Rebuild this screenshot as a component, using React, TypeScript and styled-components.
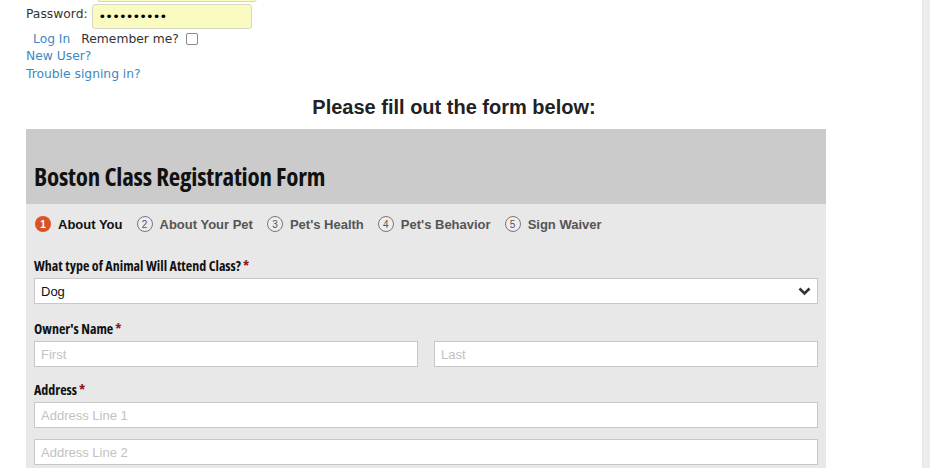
import React from "react";
import styled, { createGlobalStyle } from "styled-components";

const GlobalStyle = createGlobalStyle`
  html, body { margin: 0; padding: 0; background: #ffffff; overflow: hidden; }
  * { box-sizing: border-box; }
`;

const Shell = styled.div`
  display: flex;
  width: 930px;
  height: 468px;
  overflow: hidden;
`;

const Main = styled.div`
  flex: 1;
  padding-left: 26px;
  overflow: hidden;
`;

const ScrollTrack = styled.div`
  width: 8px;
  background: #ececec;
  border-left: 1px solid #e6e6e6;
`;

const Content = styled.div`
  width: 856px;
`;

const LoginBlock = styled.div`
  margin-top: -23px;
  font-family: "DejaVu Sans", Verdana, sans-serif;
  font-size: 12.3px;
  color: #333;
`;

const CredRow = styled.div`
  display: flex;
  align-items: flex-start;
  margin-bottom: 2px;
`;

const CredLabel = styled.span`
  padding-top: 3px;
  line-height: 15px;
  margin-right: 4px;
`;

const CredInput = styled.input`
  width: 160px;
  height: 25px;
  border: 1px solid #d6d6c4;
  border-radius: 3px;
  background: #fafbc0;
  padding: 0 6px;
  font-family: "DejaVu Sans", Verdana, sans-serif;
  font-size: 13px;
  color: #000;
  letter-spacing: -0.9px;
  outline: none;
`;

const ActionRow = styled.div`
  display: flex;
  align-items: center;
  height: 18px;
  margin-top: -1px;
  padding-left: 7px;
`;

const Link = styled.a`
  color: #3b88c6;
  text-decoration: none;
  cursor: pointer;
`;

const Remember = styled.span`
  margin-left: 11px;
  color: #333;
`;

const Check = styled.span`
  display: inline-block;
  width: 12px;
  height: 12px;
  margin-left: 7px;
  border: 1px solid #8a8a8a;
  border-radius: 2px;
  background: #fff;
`;

const LinkList = styled.div`
  margin-top: -1px;
`;

const LinkLine = styled.div`
  line-height: 18px;
  height: 18px;
`;

const PageHeading = styled.h2`
  margin: 12px 0 10px;
  text-align: center;
  font-family: "Liberation Sans", Arial, sans-serif;
  font-size: 20px;
  line-height: 24px;
  font-weight: 700;
  color: #222;
`;

const Form = styled.div`
  width: 800px;
`;

const FormHeader = styled.div`
  height: 75px;
  background: #cbcbcb;
  padding: 32px 8px 0;
`;

const FormTitle = styled.h1`
  margin: 0;
  font-family: "Open Sans", sans-serif;
  font-stretch: 75%;
  font-weight: 700;
  font-size: 25px;
  line-height: 30px;
  color: #111;
  letter-spacing: -0.2px;
`;

const FormBody = styled.div`
  background: #e8e8e8;
  padding: 12px 8px 10px;
`;

const Steps = styled.div`
  display: flex;
  align-items: center;
  height: 16px;
  margin-bottom: 25px;
  padding-left: 1px;
`;

const Step = styled.div`
  display: flex;
  align-items: center;
  margin-right: 14px;
`;

const StepNum = styled.span<{ $active?: boolean }>`
  display: flex;
  align-items: center;
  justify-content: center;
  width: 16px;
  height: 16px;
  border-radius: 50%;
  margin-right: 7px;
  font-family: "Liberation Sans", Arial, sans-serif;
  font-size: 10px;
  font-weight: ${(p) => (p.$active ? 700 : 400)};
  color: ${(p) => (p.$active ? "#fff" : "#555")};
  background: ${(p) => (p.$active ? "#dc5323" : "#eeeeee")};
  border: ${(p) => (p.$active ? "none" : "1px solid #777")};
`;

const StepText = styled.span<{ $active?: boolean }>`
  font-family: "Liberation Sans", Arial, sans-serif;
  font-size: 13px;
  font-weight: 700;
  color: ${(p) => (p.$active ? "#111" : "#555")};
`;

const Field = styled.div<{ $gap?: number }>`
  margin-bottom: ${(p) => p.$gap ?? 14}px;
`;

const FieldLabel = styled.div`
  height: 18px;
  line-height: 18px;
  margin-bottom: 3px;
  font-family: "Open Sans", sans-serif;
  font-stretch: 75%;
  font-weight: 700;
  font-size: 14px;
  color: #111;
`;

const Req = styled.span`
  color: #8e1717;
  margin-left: 2px;
`;

const SelectBox = styled.div`
  display: flex;
  align-items: center;
  justify-content: space-between;
  height: 26px;
  background: #fff;
  border: 1px solid #c8c8c8;
  padding: 0 6px 0 6px;
  font-family: "Liberation Sans", Arial, sans-serif;
  font-size: 13px;
  color: #111;
`;

const TextInput = styled.input`
  display: block;
  width: 100%;
  height: 26px;
  background: #fff;
  border: 1px solid #c8c8c8;
  padding: 0 6px;
  font-family: "Liberation Sans", Arial, sans-serif;
  font-size: 13px;
  color: #111;
  outline: none;
  &::placeholder { color: #c2c2c2; }
`;

const TwoCol = styled.div`
  display: grid;
  grid-template-columns: 1fr 1fr;
  column-gap: 16px;
`;

const Stack = styled.div`
  display: flex;
  flex-direction: column;
  gap: 11px;
`;

const steps = ["About You", "About Your Pet", "Pet's Health", "Pet's Behavior", "Sign Waiver"];

export default function App() {
  return (
    <>
      <GlobalStyle />
      <Shell>
        <Main>
          <Content>
            <LoginBlock>
              <CredRow>
                <CredLabel>Username:</CredLabel>
                <CredInput defaultValue="" readOnly />
              </CredRow>
              <CredRow>
                <CredLabel>Password:</CredLabel>
                <CredInput type="password" defaultValue="abcdefghij" readOnly />
              </CredRow>
              <ActionRow>
                <Link>Log In</Link>
                <Remember>Remember me?</Remember>
                <Check />
              </ActionRow>
              <LinkList>
                <LinkLine><Link>New User?</Link></LinkLine>
                <LinkLine><Link>Trouble signing in?</Link></LinkLine>
              </LinkList>
            </LoginBlock>
            <PageHeading>Please fill out the form below:</PageHeading>
            <Form>
              <FormHeader>
                <FormTitle>Boston Class Registration Form</FormTitle>
              </FormHeader>
              <FormBody>
                <Steps>
                  {steps.map((s, i) => (
                    <Step key={s}>
                      <StepNum $active={i === 0}>{i + 1}</StepNum>
                      <StepText $active={i === 0}>{s}</StepText>
                    </Step>
                  ))}
                </Steps>
                <Field $gap={16}>
                  <FieldLabel>What type of Animal Will Attend Class?<Req>*</Req></FieldLabel>
                  <SelectBox>
                    <span>Dog</span>
                    <svg width="13" height="9" viewBox="0 0 13 9">
                      <path d="M1.5 1.5 L6.5 6.5 L11.5 1.5" fill="none" stroke="#333" strokeWidth="2.6" />
                    </svg>
                  </SelectBox>
                </Field>
                <Field $gap={14}>
                  <FieldLabel>Owner's Name<Req>*</Req></FieldLabel>
                  <TwoCol>
                    <TextInput placeholder="First" />
                    <TextInput placeholder="Last" />
                  </TwoCol>
                </Field>
                <Field>
                  <FieldLabel>Address<Req>*</Req></FieldLabel>
                  <Stack>
                    <TextInput placeholder="Address Line 1" />
                    <TextInput placeholder="Address Line 2" />
                  </Stack>
                </Field>
              </FormBody>
            </Form>
          </Content>
        </Main>
        <ScrollTrack />
      </Shell>
    </>
  );
}
